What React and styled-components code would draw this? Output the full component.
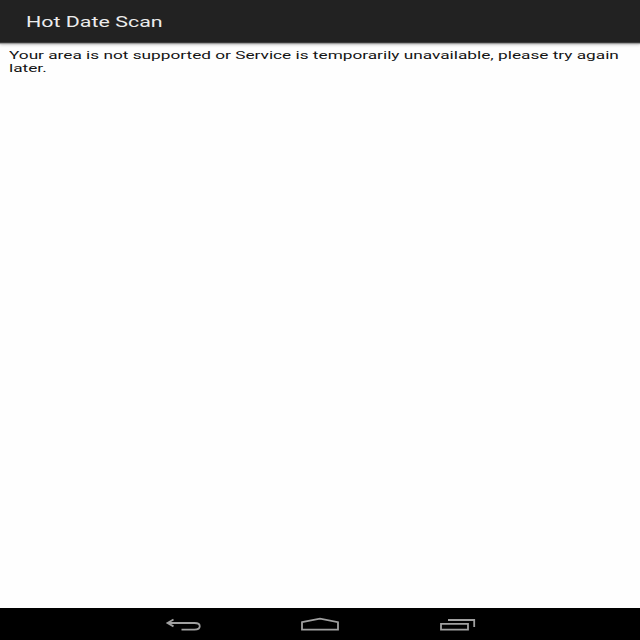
import React from "react";
import styled, { createGlobalStyle } from "styled-components";

const GlobalStyle = createGlobalStyle`
  * { box-sizing: border-box; }
  body { margin: 0; background: #fff; }
`;

const Screen = styled.div`
  display: flex;
  flex-direction: column;
  width: 640px;
  height: 640px;
  overflow: hidden;
  background: #fefefe;
  font-family: Roboto, sans-serif;
`;

const TitleBar = styled.header`
  flex: none;
  display: flex;
  align-items: center;
  height: 43px;
  padding: 2px 0 0 26px;
  background: #222;
  border-bottom: 1px solid #3c3c3c;
  box-shadow: 0 1px 1px #9c9c9c, 0 2px 3px #cccccc;
`;

const Title = styled.h1`
  margin: 0;
  font-size: 14px;
  font-weight: 400;
  line-height: 18px;
  white-space: nowrap;
  color: #ececec;
  transform: scaleX(1.53);
  transform-origin: 0 50%;
`;

const Content = styled.main`
  flex: 1;
  padding: 6px 0 0 9px;
`;

const Message = styled.p`
  margin: 0;
  width: 410px;
  font-size: 11.2px;
  line-height: 13px;
  white-space: nowrap;
  color: #141414;
  transform: scaleX(1.54);
  transform-origin: 0 0;
`;

const NavBar = styled.nav`
  flex: none;
  display: flex;
  justify-content: center;
  gap: 87px;
  height: 32px;
  background: #000;
`;

const NavIcon = styled.svg`
  display: block;
  width: 50px;
  height: 32px;
  fill: none;
  stroke: #a0a0a0;
  stroke-width: 1.8;
`;

export default function App() {
  return (
    <>
      <GlobalStyle />
      <Screen>
        <TitleBar>
          <Title>Hot Date Scan</Title>
        </TitleBar>
        <Content>
          <Message>
            Your area is not supported or Service is temporarily unavailable, please try again
            <br />
            later.
          </Message>
        </Content>
        <NavBar>
          <NavIcon viewBox="0 0 50 32" aria-label="Back">
            <path d="M15.5 11.4 L9.5 15 L15.5 18.4 M9.5 15 H36.5 C43.5 15 43.5 21.6 36.5 21.6 H23.5" />
          </NavIcon>
          <NavIcon viewBox="0 0 50 32" aria-label="Home">
            <path d="M7 14.2 L25 10.7 L43 14.2 V21.6 H7 Z" />
          </NavIcon>
          <NavIcon viewBox="0 0 50 32" aria-label="Recent apps">
            <path d="M9 15.8 H36 V21.7 H9 Z M16 12 H42.2 V19" />
          </NavIcon>
        </NavBar>
      </Screen>
    </>
  );
}
